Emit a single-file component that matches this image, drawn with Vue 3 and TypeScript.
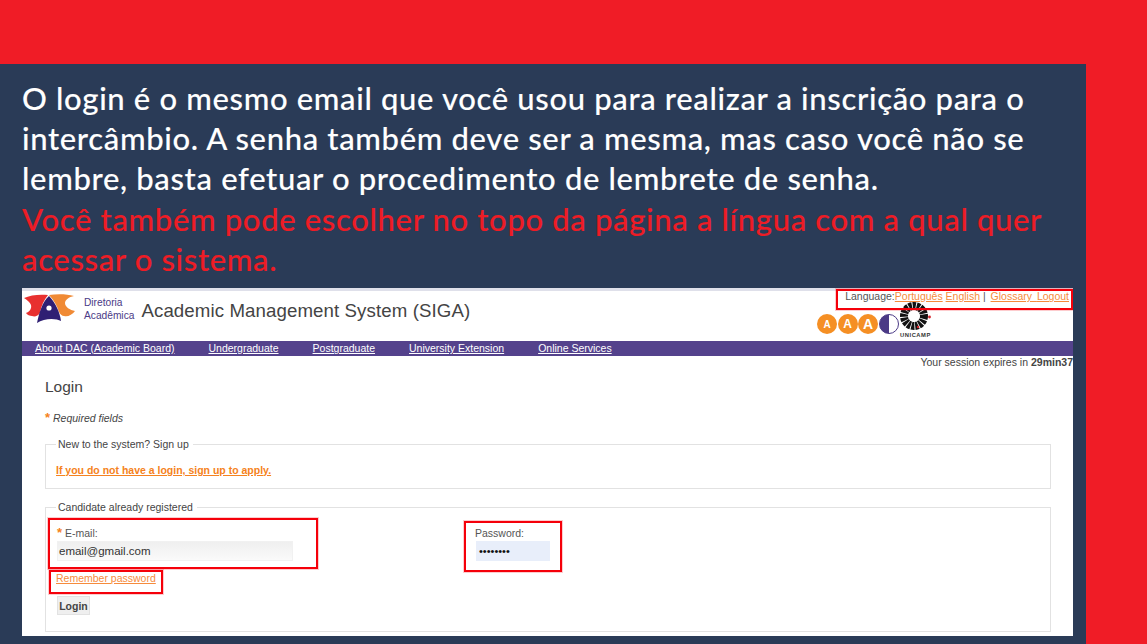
<template>
  <div class="slide">
    <main class="panel">
      <div class="copy">
        <p>O login é o mesmo email que você usou para realizar a inscrição para o intercâmbio. A senha também deve ser a mesma, mas caso você não se lembre, basta efetuar o procedimento de lembrete de senha.</p>
        <p class="accent">Você também pode escolher no topo da página a língua com a qual quer acessar o sistema.</p>
      </div>

      <section class="shot">
        <div class="top-rule"></div>
        <header class="site-head">
          <div class="brand">
            <svg class="logo" width="52" height="32" viewBox="0 0 52 32">
              <path d="M0 4 C6 1 16 0 24 1 C20 6 17 12 16 19 C14 22 11 23 8 22 C6 22 3 21 2 19 C5 18 8 15 7 11 C6 8 3 6 0 4Z" fill="#e8302f" />
              <path d="M25 1 C33 0 43 0 50 2 C45 3 41 6 41 9 C41 13 46 16 51 17 C48 21 44 23 40 22 C38 22 36 20 35 18 C33 12 30 6 25 1Z" fill="#f08a35" />
              <path d="M13 29 C15 20 18 8 25 2 C31 8 36 18 37 27 C32 24 20 24 13 29Z" fill="#2f1f73" />
              <circle cx="25" cy="14" r="2.6" fill="#fff" />
            </svg>
            <div class="dept">Diretoria<br />Acadêmica</div>
            <div class="site-title">Academic Management System (SIGA)</div>
          </div>
          <div class="tools">
            <div class="lang">
              Language:<a>Português</a> <a>English</a> <span class="sep">|</span> &nbsp;<a>Glossary<span class="thin">&nbsp;&nbsp;</span>Logout</a>
            </div>
            <div class="access">
              <span v-for="size in fontSizes" :key="size" class="dot" :style="{ fontSize: size + 'px' }">A</span>
              <span class="contrast"></span>
              <div class="unicamp">
                <svg width="31" height="30" viewBox="0 0 31 30">
                  <circle cx="14" cy="14" r="10" fill="none" stroke="#111" stroke-width="8" stroke-dasharray="3 0.8" />
                  <circle cx="29.5" cy="15" r="1.4" fill="#d3232a" />
                  <circle cx="18" cy="25" r="1.2" fill="#d3232a" />
                </svg>
                <span>UNICAMP</span>
              </div>
            </div>
          </div>
        </header>

        <nav class="site-nav">
          <a v-for="item in navItems" :key="item">{{ item }}</a>
        </nav>

        <div class="session">Your session expires in <b>29min37</b></div>

        <div class="content">
          <h1>Login</h1>
          <div class="required"><span class="star">*</span> <i>Required fields</i></div>

          <fieldset class="signup">
            <legend>New to the system? Sign up</legend>
            <a class="apply">If you do not have a login, sign up to apply.</a>
          </fieldset>

          <fieldset class="signin">
            <legend>Candidate already registered</legend>
            <div class="fields">
              <div class="field email">
                <label><span class="star">*</span> E-mail:</label>
                <div class="input">email@gmail.com</div>
              </div>
              <div class="field password">
                <label>Password:</label>
                <div class="input filled">••••••••</div>
              </div>
            </div>
            <a class="remember">Remember password</a>
            <button class="login-btn" type="button">Login</button>
          </fieldset>
        </div>

        <!-- highlight boxes drawn on top of the screenshot -->
        <div class="mark mark-lang"></div>
        <div class="mark mark-email"></div>
        <div class="mark mark-remember"></div>
        <div class="mark mark-password"></div>
      </section>
    </main>
  </div>
</template>

<script setup lang="ts">
const fontSizes: number[] = [10, 12, 14]

const navItems: string[] = [
  'About DAC (Academic Board)',
  'Undergraduate',
  'Postgraduate',
  'University Extension',
  'Online Services',
]
</script>

<style>
html,
body {
  margin: 0;
  background: #f01c26;
  overflow: hidden;
}
</style>

<style scoped>
.slide {
  width: 1147px;
  height: 644px;
  padding-top: 64px;
  box-sizing: border-box;
  background: #f01c26;
  overflow: hidden;
}

.panel {
  width: 1086px;
  height: 580px;
  padding: 14px 0 0 22px;
  box-sizing: border-box;
  background: #2a3b57;
  overflow: hidden;
}

.copy {
  width: 1040px;
  height: 210px;
  font-family: Lato, "Noto Sans", sans-serif;
  font-size: 31px;
  line-height: 40.2px;
  font-weight: 500;
  letter-spacing: 0.66px;
  -webkit-text-stroke: 0.1px currentColor;
  color: #fff;
}

.copy p {
  margin: 0;
}

.copy .accent {
  color: #ee1c25;
}

.shot {
  position: relative;
  width: 1051px;
  height: 348px;
  background: #fff;
  font-family: "Liberation Sans", Arial, sans-serif;
  color: #444;
  overflow: hidden;
}

.top-rule {
  height: 3px;
  background: #dfe0ea;
}

.site-head {
  display: flex;
  justify-content: space-between;
  height: 50px;
}

.brand {
  display: flex;
  align-items: flex-start;
  padding: 3px 0 0 2px;
}

.logo {
  flex: none;
}

.dept {
  margin: 3px 0 0 8px;
  font-size: 10.2px;
  line-height: 12.5px;
  color: #4b3a86;
}

.site-title {
  margin: 5px 0 0 7px;
  font-size: 18.67px;
  line-height: 24px;
  letter-spacing: 0.1px;
  color: #444;
}

.tools {
  width: 260px;
  padding-right: 4px;
  box-sizing: border-box;
}

.lang {
  margin-top: -1px;
  font-size: 10.5px;
  line-height: 12px;
  text-align: right;
  white-space: nowrap;
  color: #555;
}

.lang a {
  color: #f68b3c;
  text-decoration: underline;
}

.sep {
  margin-right: -1px;
}

.thin {
  font-size: 8.8px;
}

.access {
  display: flex;
  align-items: flex-start;
  margin: 2px 0 0 4px;
  gap: 0.5px;
}

.dot {
  display: flex;
  align-items: center;
  justify-content: center;
  width: 20px;
  height: 20px;
  margin-top: 9px;
  border-radius: 50%;
  background: #f58f24;
  color: #fff;
  font-weight: 700;
}

.contrast {
  width: 20px;
  height: 20px;
  margin-top: 9px;
  box-sizing: border-box;
  border: 1px solid #4b3a86;
  border-radius: 50%;
  background: linear-gradient(90deg, #4b3a86 50%, #fff 50%);
}

.unicamp {
  display: flex;
  flex-direction: column;
  margin: -3px 0 0 1px;
  font-size: 5.8px;
  font-weight: 700;
  line-height: 6px;
  letter-spacing: 0.55px;
  color: #333;
}

.site-nav {
  display: flex;
  gap: 34px;
  height: 15px;
  padding-left: 13px;
  background: #54428c;
}

.site-nav a {
  font-size: 10.5px;
  line-height: 15px;
  color: #fff;
  text-decoration: underline;
}

.session {
  height: 14px;
  font-size: 10.5px;
  line-height: 12px;
  text-align: right;
  white-space: nowrap;
  color: #444;
}

.content {
  padding: 8px 22px 0 23px;
}

h1 {
  margin: 0;
  font-size: 15.5px;
  font-weight: 400;
  line-height: 18px;
  color: #444;
}

.required {
  margin-top: 16px;
  font-size: 10.5px;
  line-height: 12px;
}

.star {
  color: #f58220;
  font-weight: 700;
  font-size: 13px;
  line-height: 10px;
}

fieldset {
  margin: 0;
  padding: 0 10px;
  border: 1px solid #e2e2e2;
  min-width: 0;
}

legend {
  padding: 0 4px 0 2px;
  font-size: 10.5px;
  line-height: 12px;
  color: #444;
}

.signup {
  height: 51px;
  margin-top: 14px;
  box-sizing: border-box;
}

.apply {
  display: block;
  margin-top: 14px;
  font-size: 10.5px;
  font-weight: 700;
  line-height: 12px;
  color: #f58220;
  text-decoration: underline;
}

.signin {
  height: 131px;
  margin-top: 12px;
  box-sizing: border-box;
}

.fields {
  display: flex;
  margin-top: 14px;
}

.field label {
  display: block;
  font-size: 10.5px;
  line-height: 12px;
  color: #555;
}

.email {
  width: 419px;
}

.email label {
  margin-left: 1px;
}

.input {
  width: 236px;
  height: 20px;
  margin: 2px 0 0 1px;
  padding-left: 1px;
  box-sizing: border-box;
  background: linear-gradient(180deg, #efefef, #fafafa);
  border: 1px solid #f1f1f1;
  font-size: 11.5px;
  line-height: 18px;
  color: #333;
}

.filled {
  width: 74px;
  padding-left: 2px;
  background: #e8eefa;
  border-color: #e8eefa;
  color: #111;
  font-size: 11px;
}

.remember {
  display: block;
  margin-top: 11px;
  font-size: 10.5px;
  line-height: 12px;
  color: #f68b3c;
  text-decoration: underline;
}

.login-btn {
  display: block;
  width: 33px;
  height: 19px;
  margin: 12px 0 0 1px;
  padding: 0;
  border: 1px solid #e2e2e2;
  background: #efefef;
  font-family: inherit;
  font-size: 10.5px;
  font-weight: 700;
  color: #444;
}

.mark {
  position: absolute;
  border: 2px solid #f5000a;
  box-shadow: 0 0 0 1px rgba(245, 0, 10, 0.2);
  box-sizing: border-box;
}

.mark-lang {
  left: 814px;
  top: 1px;
  width: 237px;
  height: 21px;
}

.mark-email {
  left: 26px;
  top: 230px;
  width: 270px;
  height: 51px;
}

.mark-remember {
  left: 27px;
  top: 282px;
  width: 114px;
  height: 24px;
}

.mark-password {
  left: 442px;
  top: 233px;
  width: 98px;
  height: 51px;
}
</style>
